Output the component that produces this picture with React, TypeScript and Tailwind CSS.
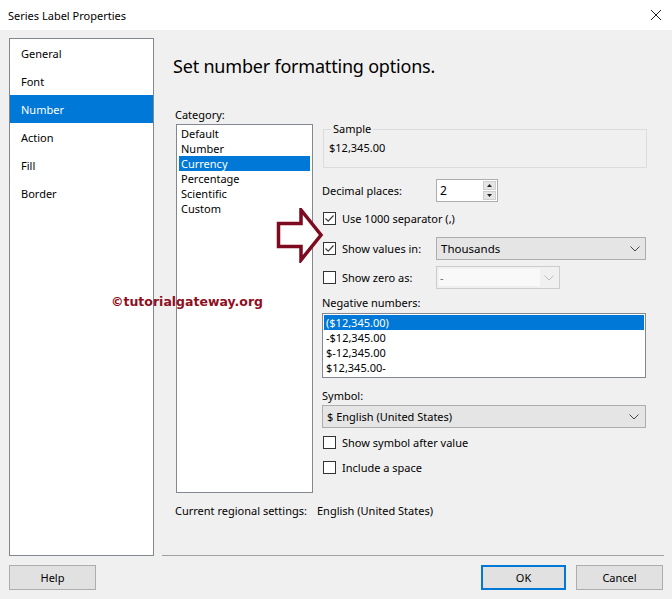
import React from 'react';

const sideItems = ['General', 'Font', 'Number', 'Action', 'Fill', 'Border'];
const categories = ['Default', 'Number', 'Currency', 'Percentage', 'Scientific', 'Custom'];
const negatives = ['($12,345.00)', '-$12,345.00', '$-12,345.00', '$12,345.00-'];

const Check = ({ checked }: { checked?: boolean }) => (
  <span className="w-[13px] h-[13px] border border-[#333333] bg-white flex items-center justify-center shrink-0">
    {checked && (
      <svg width="11" height="11" viewBox="0 0 11 11">
        <path d="M1.5 5.5 L4.2 8.2 L9.5 2.5" fill="none" stroke="#3b3b3b" strokeWidth="1.2" />
      </svg>
    )}
  </span>
);

const Chevron = ({ color = '#444444' }: { color?: string }) => (
  <svg width="10" height="6" viewBox="0 0 10 6">
    <path d="M0.5 0.5 L5 5 L9.5 0.5" fill="none" stroke={color} strokeWidth="1" />
  </svg>
);

const CheckRow = ({ label, checked, className = '' }: { label: string; checked?: boolean; className?: string }) => (
  <div className={`flex items-center gap-[6px] pl-[1px] whitespace-nowrap ${className}`}>
    <Check checked={checked} />
    <span>{label}</span>
  </div>
);

export default function App() {
  return (
    <div
      className="relative w-[672px] h-[599px] bg-[#f0f0f0] text-[11px] leading-[15px] text-black overflow-hidden"
      style={{ fontFamily: '"Segoe UI", "Noto Sans", sans-serif' }}
    >
      {/* title bar */}
      <div className="h-[30px] bg-white flex items-center justify-between pl-[8px] pr-[10px]">
        <span>Series Label Properties</span>
        <svg width="12" height="12" viewBox="0 0 12 12">
          <path d="M1 1 L11 11 M11 1 L1 11" stroke="#222" strokeWidth="1" />
        </svg>
      </div>

      <div className="flex pl-[9px] pt-[8px]">
        {/* left nav */}
        <div className="w-[145px] h-[518px] border border-[#828790] bg-white shrink-0">
          {sideItems.map((s) => (
            <div
              key={s}
              className={`h-[28px] flex items-center pl-[11px] ${s === 'Number' ? 'bg-[#0078d7] text-white' : ''}`}
            >
              {s}
            </div>
          ))}
        </div>

        {/* right area */}
        <div className="ml-[8px] w-[502px] flex flex-col">
          <div className="pl-[11px] pt-[16px] h-[68px] text-[18px] leading-[24px] tracking-[-0.2px]">
            Set number formatting options.
          </div>

          <div className="flex">
            {/* category column */}
            <div className="pl-[13px] w-[160px] flex flex-col">
              <div className="h-[16px] flex items-center">Category:</div>
              <div className="mt-[2px] ml-[1px] w-[137px] h-[369px] border border-[#828790] bg-white pt-[1px] px-[2px]">
                {categories.map((c) => (
                  <div
                    key={c}
                    className={`h-[15px] pl-[2px] flex items-center ${c === 'Currency' ? 'bg-[#0078d7] text-white' : ''}`}
                  >
                    {c}
                  </div>
                ))}
              </div>
            </div>

            {/* options column */}
            <div className="w-[324px] flex flex-col">
              <fieldset className="mt-[15px] ml-[1px] w-[324px] h-[47px] border border-[#dcdcdc] px-[6px]">
                <legend className="px-[2px] ml-[1px] leading-[16px]">Sample</legend>
                <div className="pt-[3px] -ml-[1px]">$12,345.00</div>
              </fieldset>

              <div className="mt-[11px] h-[23px] flex items-center">
                <span className="w-[114px]">Decimal places:</span>
                <div className="w-[62px] h-[23px] border border-[#adadad] bg-white flex items-center justify-between pl-[3px] pr-[1px]">
                  <span className="text-[12px]">2</span>
                  <div className="flex flex-col gap-[1px]">
                    <div className="w-[13px] h-[9px] bg-[#e5e5e5] border border-[#cfcfcf] flex items-center justify-center">
                      <svg width="5" height="3" viewBox="0 0 5 3"><path d="M0 3 L2.5 0 L5 3 Z" fill="#222" /></svg>
                    </div>
                    <div className="w-[13px] h-[9px] bg-[#e5e5e5] border border-[#cfcfcf] flex items-center justify-center">
                      <svg width="5" height="3" viewBox="0 0 5 3"><path d="M0 0 L2.5 3 L5 0 Z" fill="#222" /></svg>
                    </div>
                  </div>
                </div>
              </div>

              <CheckRow label="Use 1000 separator (,)" checked className="mt-[6px] h-[20px]" />

              <div className="mt-[9px] h-[23px] flex items-center">
                <CheckRow label="Show values in:" checked className="w-[114px]" />
                <div className="w-[210px] h-[23px] border border-[#adadad] bg-[#e5e5e5] flex items-center justify-between pl-[4px] pr-[5px] text-[11.5px]">
                  <span>Thousands</span>
                  <Chevron />
                </div>
              </div>

              <div className="mt-[6px] h-[23px] flex items-center">
                <CheckRow label="Show zero as:" className="w-[114px]" />
                <div className="w-[124px] h-[23px] border border-[#cccccc] bg-[#f0f0f0] flex items-center p-[2px] pr-[5px] gap-[4px]">
                  <div className="flex-1 h-full bg-[#f9f9f9] flex items-center pl-[1px] text-[#6d6d6d]">-</div>
                  <Chevron color="#bcbcbc" />
                </div>
              </div>

              <div className="mt-[5px] h-[16px] flex items-center">Negative numbers:</div>
              <div className="mt-[3px] w-[324px] h-[65px] border border-[#828790] bg-white p-[1px]">
                {negatives.map((n, i) => (
                  <div key={n} className={`h-[15px] pl-[2px] flex items-center ${i === 0 ? 'bg-[#0078d7] text-white' : ''}`}>
                    {n}
                  </div>
                ))}
              </div>

              <div className="mt-[9px] h-[16px] flex items-center">Symbol:</div>
              <div className="mt-[2px] w-[324px] h-[23px] border border-[#adadad] bg-[#e5e5e5] flex items-center justify-between pl-[4px] pr-[6px]">
                <span>$ English (United States)</span>
                <Chevron />
              </div>

              <CheckRow label="Show symbol after value" className="mt-[5px] h-[18px]" />
              <CheckRow label="Include a space" className="mt-[7px] h-[18px]" />
            </div>
          </div>

          <div className="mt-[9px] h-[16px] flex items-center pl-[13px] whitespace-nowrap">
            <span className="w-[142px]">Current regional settings:</span>
            <span>English (United States)</span>
          </div>

          <div className="mt-[37px] h-[1px] bg-[#a0a0a0]" />
        </div>
      </div>

      {/* footer buttons */}
      <div className="mt-[9px] flex items-center px-[9px]">
        <button className="w-[87px] h-[25px] border border-[#adadad] bg-[#e1e1e1]">Help</button>
        <div className="flex-1" />
        <button className="w-[85px] h-[25px] border-2 border-[#0078d7] bg-[#e1e1e1]">OK</button>
        <button className="ml-[10px] w-[87px] h-[25px] border border-[#adadad] bg-[#e1e1e1]">Cancel</button>
      </div>

      {/* watermark */}
      <div
        className="absolute left-[111px] top-[294px] text-[12.5px] leading-[16px] font-bold text-[#8e0f21]"
        style={{ fontFamily: 'Verdana, "DejaVu Sans", sans-serif' }}
      >
        ©tutorialgateway.org
      </div>

      {/* arrow */}
      <svg className="absolute left-[276px] top-[208px]" width="48" height="55" viewBox="0 0 48 55">
        <path
          d="M2.5 15.5 L25 15.5 L25 2 L45 27 L25 52 L25 38.5 L2.5 38.5 Z"
          fill="white"
          stroke="#7d0a1f"
          strokeWidth="3.5"
        />
      </svg>
    </div>
  );
}
